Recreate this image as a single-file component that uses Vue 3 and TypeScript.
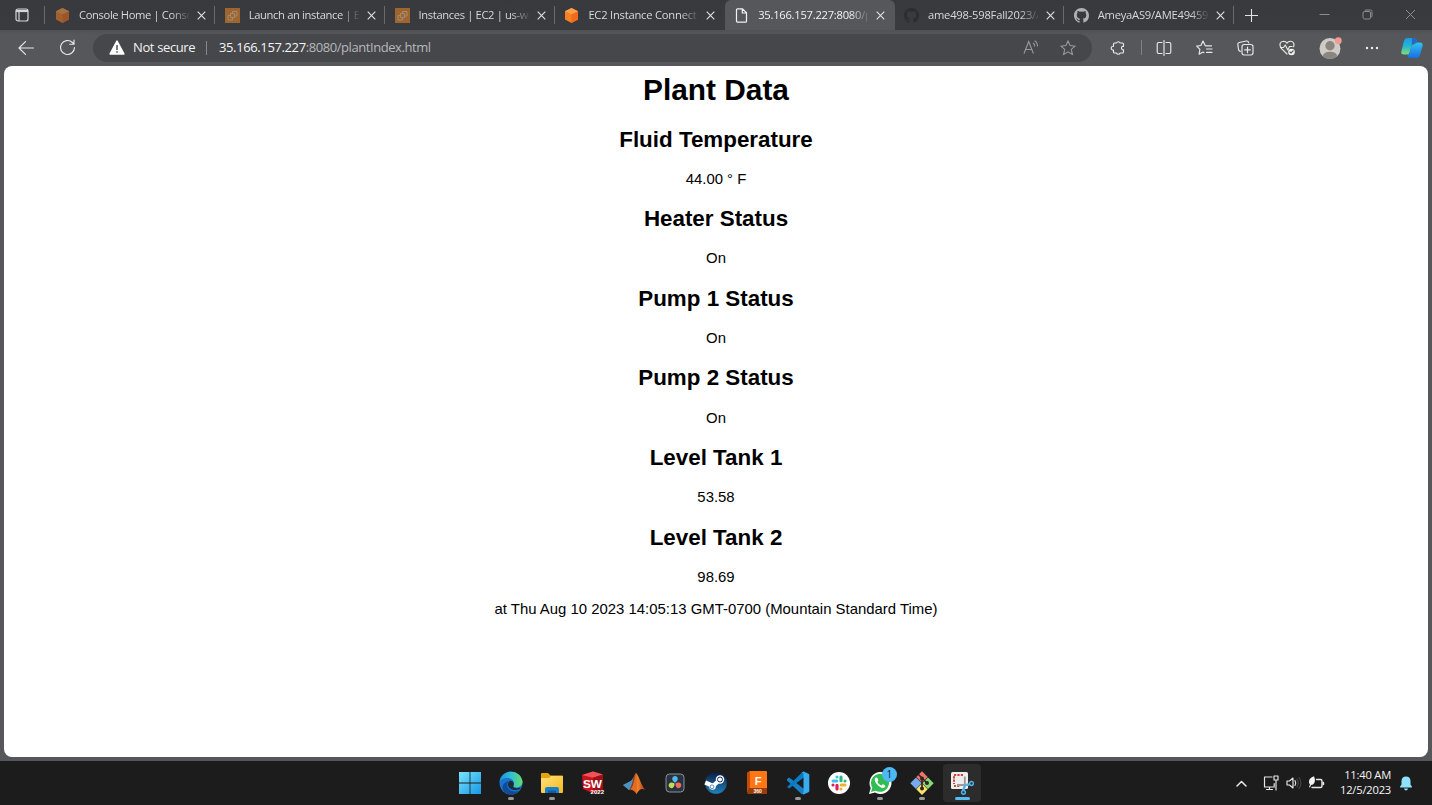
<script setup lang="ts">
interface Tab {
  title: string
  icon: string
  active?: boolean
  dim?: boolean
  spacing: string
}

const tabs: Tab[] = [
  { title: 'Console Home | Console', icon: 'cube', dim: true, spacing: 's0' },
  { title: 'Launch an instance | EC2', icon: 'ec2', dim: true, spacing: 's0' },
  { title: 'Instances | EC2 | us-west-2', icon: 'ec2', dim: true, spacing: 's0' },
  { title: 'EC2 Instance Connect', icon: 'cube', spacing: 's1' },
  { title: '35.166.157.227:8080/plantIndex', icon: 'file', active: true, spacing: 's2' },
  { title: 'ame498-598Fall2023/AME', icon: 'github-dark', spacing: 's1' },
  { title: 'AmeyaAS9/AME494598', icon: 'github', spacing: 's3' },
]

const readings = [
  { name: 'Fluid Temperature', value: '44.00 ° F' },
  { name: 'Heater Status', value: 'On' },
  { name: 'Pump 1 Status', value: 'On' },
  { name: 'Pump 2 Status', value: 'On' },
  { name: 'Level Tank 1', value: '53.58' },
  { name: 'Level Tank 2', value: '98.69' },
]

const apps = [
  { icon: 'windows' },
  { icon: 'edge', running: true },
  { icon: 'folder', running: true },
  { icon: 'solidworks' },
  { icon: 'matlab' },
  { icon: 'resolve' },
  { icon: 'steam' },
  { icon: 'fusion' },
  { icon: 'vscode', running: true },
  { icon: 'slack' },
  { icon: 'whatsapp', running: true, badge: '1' },
  { icon: 'git', running: true },
  { icon: 'snip', focused: true },
]
</script>

<template>
  <div class="screen">
    <svg class="sprite" aria-hidden="true">
      <defs>
        <linearGradient id="gWin" x1="0" y1="0" x2="1" y2="1"><stop offset="0" stop-color="#7be4fb" /><stop offset="1" stop-color="#1597e6" /></linearGradient>
        <linearGradient id="gEdgeTop" x1="0" y1="0" x2="1" y2="0"><stop offset="0" stop-color="#1d8fd8" /><stop offset=".5" stop-color="#32bfd4" /><stop offset="1" stop-color="#65dc65" /></linearGradient>
        <linearGradient id="gFolder" x1="0" y1="0" x2="1" y2="1"><stop offset="0" stop-color="#ffe07a" /><stop offset="1" stop-color="#f5b91f" /></linearGradient>
        <linearGradient id="gMat" x1="0" y1="0" x2="1" y2="0"><stop offset="0" stop-color="#8c1d12" /><stop offset=".5" stop-color="#f08a2c" /><stop offset="1" stop-color="#b52f12" /></linearGradient>
        <linearGradient id="gSteam" x1="0" y1="0" x2="0" y2="1"><stop offset="0" stop-color="#0b1d45" /><stop offset="1" stop-color="#1f82bd" /></linearGradient>
        <linearGradient id="gCopA" x1="0" y1="0" x2="0" y2="1"><stop offset="0" stop-color="#1a9be8" /><stop offset=".5" stop-color="#25b7d0" /><stop offset="1" stop-color="#7ee070" /></linearGradient>
        <linearGradient id="gCopB" x1="0" y1="0" x2="0" y2="1"><stop offset="0" stop-color="#2fc4f5" /><stop offset="1" stop-color="#1b6ee0" /></linearGradient>
      </defs>
      <symbol id="cube" viewBox="0 0 15 15">
        <path d="M7.5 0 14 3.2v8.3L7.5 15 1 11.500V3.200z" fill="#f58220" />
        <path d="M7.500 6.200 14 3.200v8.300L7.500 15z" fill="#f26a1b" />
        <path d="M7.500 0 14 3.200 7.500 6.200 1 3.200z" fill="#fba04a" />
      </symbol>
      <symbol id="ec2" viewBox="0 0 15 15">
        <path d="M0 0h15v15H0z" fill="#f08a28" />
        <path d="M5.500 5.500h4v4h-4zM7.500 5V3.500h4.500V8h-2M5 7.500H3V12h4.500v-2" fill="none" stroke="#ffd3a0" stroke-width=".9" />
      </symbol>
      <symbol id="file" viewBox="0 0 15 15">
        <path d="M3.500.8h5l4 4v8.400q0 1-1 1h-8q-1 0-1-1V1.800q0-1 1-1zM8.300.8V5h4.200" fill="none" stroke="#f0f0f0" stroke-width="1.200" />
      </symbol>
      <symbol id="github" viewBox="0 0 16 16">
        <path fill="currentColor" d="M8 0C3.580 0 0 3.580 0 8c0 3.540 2.290 6.530 5.470 7.590.4.070.55-.17.55-.38v-1.490c-2.010.37-2.530-.49-2.690-.94-.09-.23-.48-.94-.82-1.130-.28-.15-.68-.52-.01-.53.63-.01 1.080.58 1.230.82.72 1.210 1.870.87 2.330.66.070-.52.28-.87.51-1.070-1.780-.2-3.640-.89-3.640-3.950 0-.87.31-1.590.82-2.150-.08-.2-.36-1.020.08-2.120 0 0 .67-.21 2.200.82a7.500 7.500 0 0 1 4 0c1.530-1.040 2.200-.82 2.200-.82.44 1.100.16 1.920.08 2.120.51.56.82 1.270.82 2.150 0 3.070-1.870 3.750-3.650 3.950.29.25.54.73.54 1.480v2.200c0 .21.15.46.55.38A8 8 0 0 0 16 8c0-4.420-3.580-8-8-8z" />
      </symbol>
      <symbol id="windows" viewBox="0 0 24 24">
        <path d="M1 1h10.600v10.600H1zM12.400 1H23v10.600H12.400zM1 12.400h10.600V23H1zM12.400 12.400H23V23H12.400z" fill="url(#gWin)" />
      </symbol>
      <symbol id="edge" viewBox="0 0 24 24">
        <circle cx="12" cy="12" r="11.500" fill="#1676cf" />
        <path d="M.6 11C2-1.500 20-3.200 23.300 9.500 24.600 15 19 17.500 15.300 16c-2-1-.6-2-.5-4 0-3-3-5-6.300-5C4.500 7 1.500 9 .6 11z" fill="url(#gEdgeTop)" />
        <path d="M8.300 12.500c-1 6 4.700 9.700 12.300 7.300C16 25.500 7.500 24.500 4 19 2.500 15 5 10.500 10.700 9.700 9.500 10.300 8.600 11.200 8.300 12.500z" fill="#124a94" />
        <path d="M10.700 9.700c3.300-.2 5.300 2.500 3.700 5-1 1.900 2.600 3.700 7.200 1.800l-.6 1.600C15 20.500 8.500 18 8.900 12.500z" fill="#1c1c1c" opacity=".82" />
      </symbol>
      <symbol id="folder" viewBox="0 0 24 24">
        <path d="M1 3q0-1 1-1h6l2.500 2.500H22q1 0 1 1V12H1z" fill="#e5a50a" />
        <path d="M1 7h8l2-2h12v16q0 1-1 1H2q-1 0-1-1z" fill="url(#gFolder)" />
        <path d="M5 22v-4q0-2 2-2h10q2 0 2 2v4z" fill="#1680cf" /><path d="M8 19.500h8v2.500H8z" fill="#0c5da5" />
      </symbol>
      <symbol id="matlab" viewBox="0 0 24 24">
        <path d="m1 14 6-3 5 3-5 5z" fill="#3f78aa" /><path d="M7 11c4-1 5-6 7-9l-2 14-5 3z" fill="#61a8d0" />
        <path d="M14 2c3 2 5 13 9.500 17-4-2-6-1-9 4-1.500-3-3.500-4.500-7.500-4 4-3 4-13 7-17z" fill="url(#gMat)" />
        <path d="M14 2c2 4 1.500 12 .5 21-1.500-3-3.500-4.500-6-4.500 3.500-3 3.500-12.500 5.500-16.500z" fill="#e46b20" />
        <path d="M14 2c-2 5-2 12-5 15l-2 2c2-3 3-13 7-17z" fill="#8f3a28" />
        <path d="m1 14 6-3c2-.5 3.500-2.500 4.500-5C10.500 10 10 15 7 19z" fill="#4c93c4" />
      </symbol>
      <symbol id="resolve" viewBox="0 0 24 24">
        <rect x="3" y="3" width="18" height="18" rx="3.500" fill="#263340" stroke="#8a9299" />
        <path d="M12 11.800C7.800 9.200 8.900 5 12 5s4.200 4.200 0 6.800z" fill="#56b8e7" /><path d="M11.600 12.400c.3 4.900-3.900 6.100-5.500 3.400s1.300-5.900 5.500-3.400z" fill="#c5d957" /><path d="M12.400 12.400c-.3 4.900 3.900 6.100 5.500 3.400s-1.300-5.900-5.500-3.400z" fill="#ee6b60" />
      </symbol>
      <symbol id="steam" viewBox="0 0 24 24">
        <circle cx="12" cy="12" r="10.800" fill="url(#gSteam)" />
        <path d="M1.200 11.500 9 15l5.500-5" stroke="#fff" stroke-width="4.200" fill="none" stroke-linejoin="round" /><circle cx="8.500" cy="15.500" r="3.300" fill="#fff" /><circle cx="16" cy="8.500" r="4.200" fill="#fff" /><circle cx="16" cy="8.500" r="2.500" fill="#fff" stroke="#122e59" stroke-width="1" /><circle cx="8" cy="15.800" r="1.900" fill="none" stroke="#2a6394" stroke-width=".7" />
      </symbol>
      <symbol id="vscode" viewBox="0 0 24 24">
        <path d="m1 8 2.200-1.500L18 18v4.500L15.500 23 1 9.500z" fill="#1680c6" /><path d="M1 16 16.500 1l2 .5V6L3.200 17.500z" fill="#087bc1" />
        <path d="m17.500.5 5 2.300q.8.400.8 1.200v16q0 .8-.8 1.200l-5 2.300-2-1q2 .5 2-1.500V3q0-1.700-2-1.500z" fill="#38acef" />
      </symbol>
      <symbol id="slack" viewBox="0 0 24 24">
        <circle cx="12" cy="12" r="11" fill="#fff" />
        <g fill="none" stroke-width="3.100" stroke-linecap="round">
          <path d="M6 10h3.800M10 6h.01" stroke="#36c5f0" /><path d="M14 6v3.800M18 10h.01" stroke="#2eb67d" />
          <path d="M14.200 14H18M14 18h.01" stroke="#ecb22e" /><path d="M10 14.200V18M6 14h.01" stroke="#e01e5a" />
        </g>
      </symbol>
      <symbol id="whatsapp" viewBox="0 0 24 24">
        <path d="m1 23 1.700-6A11 11 0 1 1 7 21.500z" fill="#fff" /><path d="m3 21 1.300-4.500A9 9 0 1 1 7.600 19.700z" fill="#31bd52" />
        <path d="M8 6.500c-2 1-1.500 4 1.200 7s6.200 4.500 7.700 2.500c1-1.500.1-1.800-1.500-2.600-1.300-.7-1.200.6-2.100 1-1.500-.3-3.500-2.300-3.900-3.600.6-.7 1.200-1 .7-2.200-.5-1.500-.9-2.500-2.100-2.100z" fill="#fff" />
      </symbol>
      <symbol id="git" viewBox="0 0 24 24">
        <path d="M12 .3 6.300 6 12 11.700 17.700 6z" fill="#f07370" /><path d="M6 6.500.3 12.200 6 17.900l5.700-5.700z" fill="#76a9ee" /><path d="m18 6.500-5.700 5.700 5.700 5.700 5.700-5.700z" fill="#8bd778" /><path d="m12 12.500-5.700 5.700 5.700 5.700 5.700-5.700z" fill="#ffe267" />
        <path d="m8 3 4 4v11M12 7l5 5" fill="none" stroke="#30251e" stroke-width="1.600" /><g fill="#30251e"><circle cx="12" cy="7.500" r="2" /><circle cx="12" cy="17.500" r="2" /><circle cx="17" cy="12" r="2" /></g>
      </symbol>
      <symbol id="snip" viewBox="0 0 24 24">
        <rect x="1" y="1" width="17" height="17" rx="1.500" fill="#eee" />
        <path d="M13 4H4v9" fill="none" stroke="#d04432" stroke-width="2" stroke-dasharray="2.200 1.200" /><path d="M4 15h6" stroke="#d04432" stroke-width="1.800" stroke-dasharray="2 1.200" />
        <path d="M14.800 5.500v10l-2 4M7 14h12" fill="none" stroke="#9b9b9b" stroke-width="1.800" />
        <path d="m15 14 5-1M14.500 15l-1 5" stroke="#4bb5ed" stroke-width="2" /><circle cx="21.500" cy="12.500" r="1.900" fill="none" stroke="#4bb5ed" stroke-width="1.500" /><circle cx="13.500" cy="21.300" r="1.900" fill="none" stroke="#4bb5ed" stroke-width="1.500" />
      </symbol>
    </svg>

    <header class="tabstrip">
      <div class="workspace">
        <svg width="14" height="14" viewBox="0 0 14 14" fill="none" stroke="#d6d6d6" stroke-width="1.200"><rect x="1" y="1" width="12" height="12" rx="2" /><path d="M1 3h12" stroke-width="2.200" /><path d="M4 4v9" /></svg>
      </div>
      <div v-for="tab in tabs" :key="tab.title" class="tab" :class="{ active: tab.active }">
        <svg class="favicon" :class="[tab.icon, { dim: tab.dim }]"><use :href="tab.icon === 'github-dark' ? '#github' : '#' + tab.icon" /></svg>
        <span class="title" :class="tab.spacing">{{ tab.title }}</span>
        <svg class="close" width="9" height="9" viewBox="0 0 9 9"><path d="m.7.700 7.600 7.600m0-7.600L.7 8.300" stroke="#e2e2e2" stroke-width="1.100" /></svg>
      </div>
      <div class="newtab"><svg width="13" height="13" viewBox="0 0 13 13"><path d="M6.500 0v13M0 6.500h13" stroke="#e2e2e2" stroke-width="1.100" /></svg></div>
      <div class="controls">
        <svg viewBox="0 0 11 11"><path d="M.5 5.500h10" /></svg>
        <svg viewBox="0 0 11 11"><rect x="1" y="2.500" width="7.500" height="7.500" rx="1.500" /><path d="M3 2.500V2q0-1 1-1h4.500q1.500 0 1.500 1.500V7q0 1-1 1h-.5" /></svg>
        <svg viewBox="0 0 11 11"><path d="m1 1 9 9m0-9-9 9" /></svg>
      </div>
    </header>

    <nav class="toolbar">
      <div class="nav"><svg width="16" height="14" viewBox="0 0 16 14" class="line"><path d="M15.500 7H1m6.500-6.300L1 7l6.500 6.300" /></svg></div>
      <div class="nav reload"><svg width="17" height="17" viewBox="0 0 17 17" class="line"><path d="M15.500 8.500a7 7 0 1 1-2.100-5L15 5.200M15 1v4.200h-4.300" /></svg></div>
      <div class="address">
        <svg width="16" height="15" viewBox="0 0 16 15"><path d="M8 1.200 14.800 14H1.200z" fill="#fff" stroke="#fff" stroke-width="1.600" stroke-linejoin="round" /><path d="M8 5v5M8 11.200v1.500" stroke="#46474b" stroke-width="1.400" /></svg>
        <span class="insecure">Not secure</span><i></i>
        <span class="url"><b>35.166.157.227</b>:8080/plantIndex.html</span>
        <div class="pill-tools">
          <svg width="16" height="15" viewBox="0 0 16 15"><path d="m1 13.500 4.700-12 4.700 12M2.700 9.500h6M10 3q2 1.200 1.500 3.500M11.700.800q3.500 2 2.600 5.500" /></svg>
          <svg width="16" height="16" viewBox="0 0 16 16"><path d="m8 1 2.100 4.600 5 .5-3.800 3.300 1.100 5L8 11.800l-4.400 2.600 1.100-5L.9 6.100l5-.5z" /></svg>
        </div>
      </div>
      <div class="tools">
        <svg width="16" height="16" viewBox="0 0 16 16" class="line"><path d="M4.500 3h2a1.900 1.900 0 0 1 3.600 0h2.400q1 0 1 1v2.300h-.7a1.800 1.800 0 0 0 0 3.500h.7V12q0 1-1 1h-2.400a1.900 1.900 0 0 1-3.600 0h-2q-1 0-1-1v-2a1.900 1.900 0 1 1 0-3.700V4q0-1 1-1z" /></svg>
        <i></i>
        <svg width="16" height="16" viewBox="0 0 16 16" class="line"><path d="M6 2.500H2.500Q1.200 2.500 1.200 4v8q0 1.500 1.300 1.500H6M10 2.500h3.500q1.300 0 1.300 1.500v8q0 1.500-1.300 1.500H10M8 .5v15" /></svg>
        <svg width="17" height="16" viewBox="0 0 17 16" class="line"><path d="M15.500 5.800H9.300L7 1 4.900 5.500l-4.200.6 3.200 3.300-.8 4.800L7 12.100l1 .6M10.500 9h5.500M10.500 12.300H16" /></svg>
        <svg width="17" height="16" viewBox="0 0 17 16" class="line"><path d="M3.500 11.300Q2 11.300 1.500 9.500L.8 4.300q0-1.500 1.500-1.800L9.500 1q1.800-.3 2.300 2" /><rect x="5" y="4.500" width="11" height="10.500" rx="2.200" /><path d="M10.500 7v5.700M7.600 9.800h5.800" /></svg>
        <svg width="17" height="16" viewBox="0 0 17 16" class="line"><path d="m8 14-6.200-6.200C.2 4.500 1 1.300 4.500 1.200c1.700 0 3 1 3.500 2 .5-1 1.800-2 3.500-2 3 0 4.200 3 3 5.500M1.500 7.500h3L6.300 5l2.500 5 1.700-3.500h2.600" /><circle cx="12.500" cy="12" r="3.300" fill="#f2f2f2" stroke="none" /><path d="m11 12 1.100 1 2-2.200" stroke="#56575b" /></svg>
        <svg width="24" height="24" viewBox="0 0 24 24"><circle cx="12" cy="12.500" r="10.500" fill="#cfcbc7" /><circle cx="12" cy="9.700" r="4.700" fill="#8b8580" /><path d="M4.800 20q1.200-4.200 7.200-4.200t7.200 4.200q-3 3-7.200 3t-7.200-3z" fill="#8b8580" /><circle cx="20.300" cy="4.700" r="3.400" fill="#f29b92" /></svg>
        <svg width="14" height="4" viewBox="0 0 14 4" fill="#eee"><circle cx="2" cy="2" r="1.200" /><circle cx="7" cy="2" r="1.200" /><circle cx="12" cy="2" r="1.200" /></svg>
        <svg width="24" height="22" viewBox="0 0 24 22"><path d="M7.500 1H14q2 0 2.500 2l.7 2.500H15q-2.500 0-3.300 2.700L9.500 16q-.7 1.500-2.500 1.500H4q-3.500 0-2.600-3.500L4 4q.8-3 3.500-3z" fill="url(#gCopA)" /><path d="M17.200 5.500h2.300q4 0 3 3.500L20 18q-.8 3-3.500 3H10q-2 0-2.500-2L7 17.500q1.800 0 2.500-1.500l2.200-7.800z" fill="url(#gCopB)" /><path d="M12 1h2q2 0 2.500 2l.7 2.500H15q-2.500 0-3.300 2.700z" fill="#2466cd" /></svg>
      </div>
    </nav>

    <main class="viewport">
      <h1>Plant Data</h1>
      <template v-for="r in readings" :key="r.name"><h2>{{ r.name }}</h2><p>{{ r.value }}</p></template>
      <p class="stamp">at Thu Aug 10 2023 14:05:13 GMT-0700 (Mountain Standard Time)</p>
    </main>

    <footer class="taskbar">
      <div class="apps">
        <div v-for="app in apps" :key="app.icon" class="app" :class="{ running: app.running, focused: app.focused }">
          <svg v-if="app.icon === 'solidworks'" viewBox="0 0 24 24">
            <path d="M1 4 12 .5 22 3.500v15.500L12 22.500 2 18z" fill="#c8141d" /><path d="m1 4 11-3.500 10 3-10 3.200z" fill="#ef5358" /><path d="M12 6.700 22 3.500V19l-10 3.500z" fill="#9d1018" />
            <text x="2" y="16.500" class="sw" textLength="19" lengthAdjust="spacingAndGlyphs">SW</text><text x="9.500" y="22.800" class="year" textLength="13.500">2022</text>
          </svg>
          <svg v-else-if="app.icon === 'fusion'" viewBox="0 0 24 24">
            <path d="M2 2 5 0h16q1 0 1 1v16H2z" fill="#ff7614" /><path d="M2 2 5 0v17l-3 5z" fill="#c64c04" /><path d="M5 17h17v6H3l-1-1z" fill="#9a3d09" />
            <text x="9.700" y="13.500" class="fusion">F</text><text x="8.500" y="22" class="num">360</text>
          </svg>
          <svg v-else><use :href="'#' + app.icon" /></svg>
          <span v-if="app.badge" class="badge">{{ app.badge }}</span>
        </div>
      </div>
      <div class="tray">
        <svg width="11" height="7" viewBox="0 0 11 7" class="line"><path d="m1 6 4.500-4.500L10 6" stroke-width="1.500" /></svg>
        <svg class="net" width="16" height="16" viewBox="0 0 16 16"><g class="line"><path d="M9 2H1.500v10h9.700V8.500M3.500 14.500h6M6.500 12v2.500M11 1h4v4h-4zM13 5v10" /></g></svg>
        <svg class="vol" width="16" height="14" viewBox="0 0 16 14"><g class="line"><path d="M1 5h2.500L7 2v10L3.500 9H1zM9 4.500q1.500 2.500 0 5" /><path d="M11 3q2.500 4 0 8M13 1.500q4 5.500 0 11" stroke="#444" /></g></svg>
        <svg class="bat" width="17" height="14" viewBox="0 0 17 14"><g class="line"><path d="M8.500 3.500h4q1.500 0 1.500 1.500v5q0 1.500-1.500 1.500H4M15.500 6.500v2" stroke-width="1.400" /></g><path d="M1 5.500Q1 2 6 .3 8.300 6 5 8.500L3 9l-1 2.500L1 11l1-2.500Q.8 7.500 1 5.500z" fill="#f5f5f5" /></svg>
        <div class="clock"><div>11:40 AM</div><div>12/5/2023</div></div>
        <svg class="bell" width="14" height="15" viewBox="0 0 14 15"><path d="M7 .5c3 0 4.500 2 4.500 4.800v3.200l1.500 2.300q.3.800-.5.800h-11q-.8 0-.5-.8l1.500-2.300V5.300C2.500 2.500 4 .5 7 .5zM5 12.500h4q-.5 2-2 2t-2-2z" fill="#8fe2fb" /></svg>
      </div>
    </footer>
  </div>
</template>

<style>
body { margin: 0; overflow: hidden; }
</style>

<style scoped>
.screen { width: 1432px; height: 805px; display: flex; flex-direction: column; background: #56575b; font-family: "Open Sans", "Noto Sans", sans-serif; overflow: hidden; }
.sprite { position: absolute; width: 0; height: 0; }
svg { flex: none; }
.line { fill: none; stroke: #e8e8e8; stroke-width: 1.15; stroke-linejoin: round; stroke-linecap: round; }
.tabstrip { height: 30px; flex: none; display: flex; background: linear-gradient(#37393d, #3a3b3f); }
.workspace { width: 44px; display: grid; place-items: center; border-right: 1px solid #696a6e; box-sizing: content-box; height: 18px; align-self: flex-start; margin: 6px .6px 0 0; }
.tab { width: 169.8px; height: 30px; flex: none; box-sizing: border-box; display: flex; align-items: center; padding-left: 9.4px; background: linear-gradient(#696a6e, #696a6e) right 6px / 1px 18px no-repeat; }
.tab:nth-child(5), .tab:nth-child(6) { background-image: none; }
.tab.active { background: #56575b; border-radius: 6px 6px 0 0; }
.favicon { width: 15px; height: 15px; margin-right: 9px; }
.favicon.dim { opacity: .55; }
.github { color: #b0b1b3; }
.github-dark { color: #2b2d31; }
.title { width: 110px; overflow: hidden; white-space: nowrap; font-size: 11.2px; line-height: 18px; height: 19px; color: #d8d8d9; mask-image: linear-gradient(90deg, #000 92px, transparent 112px); }
.s0 { letter-spacing: -.36px; }
.s1 { letter-spacing: -.22px; }
.s2 { letter-spacing: -.25px; color: #f2f2f2; }
.s3 { letter-spacing: -.24px; }
.close { margin-left: 8px; }
.newtab { width: 34px; display: grid; place-items: center; }
.controls { display: flex; margin-left: auto; }
.controls svg { width: 11px; height: 11px; margin: 9px 16px; fill: none; stroke: #8c8d90; stroke-width: 1; }
.toolbar { height: 36px; flex: none; box-sizing: border-box; padding-bottom: 1px; display: flex; align-items: center; padding-left: 5px; background: linear-gradient(#505155, #56575b 5px); }
.nav { width: 41px; display: grid; place-items: center; }
.reload { padding-left: 1px; box-sizing: border-box; }
.address { width: 999px; height: 28px; box-sizing: border-box; border-radius: 14px; background: #46474b; margin-left: 6px; padding-left: 16px; display: flex; align-items: center; font-size: 13px; color: #a5a6a8; }
.insecure { color: #f2f2f2; margin-left: 8px; width: 73px; letter-spacing: -.37px; white-space: nowrap; padding-bottom: 2px; }
.address i { width: 1px; height: 14px; background: #88898c; margin-right: 12px; }
.url { letter-spacing: -.43px; white-space: nowrap; color: #b6b7b9; padding-bottom: 2px; }
.url b { font-weight: 400; color: #f4f4f4; letter-spacing: -.38px; }
.pill-tools { margin-left: auto; display: flex; gap: 21px; padding-right: 16px; }
.pill-tools svg { fill: none; stroke: #98999c; stroke-width: 1.1; }
.tools { margin-left: 5px; display: grid; grid-template-columns: 42px 4px 41px 41px 41px 42px 43px 42px 37px; align-items: center; justify-items: center; }
.tools i { width: 1px; height: 15px; background: #828387; }
.viewport { height: 691px; flex: none; box-sizing: border-box; margin: 0 4px; padding-top: 7px; border-radius: 8px; background: #fff; color: #000; font-family: "Liberation Sans", Arial, sans-serif; font-size: 14.92px; text-align: center; }
h1 { font-size: 29.83px; line-height: 33.56px; margin: 0 0 20px; }
h2 { font-size: 22.38px; line-height: 25.36px; margin: 18.57px 0 17.7px; }
p { line-height: 17.15px; margin: 0 0 19.44px; }
.stamp { margin-top: -4.6px; }
.taskbar { height: 44px; flex: none; margin-top: 4px; background: #1c1c1c; position: relative; display: flex; }
.apps { display: flex; margin-left: 449px; }
.app { width: 41.1px; height: 44px; display: flex; justify-content: center; align-items: center; position: relative; }
.app > svg { width: 24px; height: 24px; }
.app::after { content: ""; position: absolute; bottom: 5px; width: 6px; height: 3px; border-radius: 2px; }
.running::after { background: #989898; }
.focused { width: 38px; height: 38px; border-radius: 4px; background: #2c2c2c; margin: 3px 0 0 1px; }
.focused::after { width: 15px; bottom: 2px; background: #56bdf0; }
.badge { position: absolute; left: 22px; top: 6px; width: 15px; height: 15px; border-radius: 50%; background: #4cb9f5; color: #10212c; font-size: 10px; line-height: 15px; text-align: center; }
.tray { margin-left: auto; display: flex; align-items: center; padding-right: 19px; }
.net { margin-left: 16px; }
.vol { margin-left: 7px; }
.bat { margin-left: 6px; }
.clock { color: #f4f4f4; font-size: 11.2px; line-height: 15px; letter-spacing: -.22px; text-align: right; width: 66px; margin-right: 8px; padding-bottom: 2px; white-space: nowrap; }
.sw { font: bold 11px "Liberation Sans", sans-serif; fill: #fff; }
.year { font: bold 6px "Liberation Sans", sans-serif; fill: #fff; }
.fusion { font: bold 11px "Liberation Sans", sans-serif; fill: #fff; }
.num { font: bold 5px "Liberation Sans", sans-serif; fill: #fff; }
</style>
